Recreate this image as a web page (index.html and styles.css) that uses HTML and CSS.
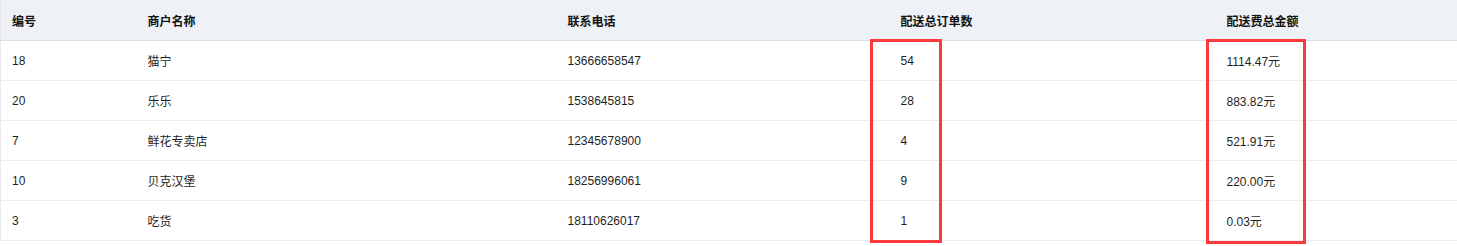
FILE: index.html
```html
<!DOCTYPE html>
<html lang="zh">
<head>
<meta charset="utf-8">
<link rel="stylesheet" href="styles.css">
</head>
<body>
<div class="wrap">
  <table class="grid">
    <colgroup>
      <col class="c1"><col class="c2"><col class="c3"><col class="c4"><col class="c5">
    </colgroup>
    <thead>
      <tr><th class="first">编号</th><th>商户名称</th><th>联系电话</th><th>配送总订单数</th><th>配送费总金额</th></tr>
    </thead>
    <tbody>
      <tr><td class="first">18</td><td>猫宁</td><td>13666658547</td><td>54</td><td>1114.47元</td></tr>
      <tr><td class="first">20</td><td>乐乐</td><td>1538645815</td><td>28</td><td>883.82元</td></tr>
      <tr><td class="first">7</td><td>鲜花专卖店</td><td>12345678900</td><td>4</td><td>521.91元</td></tr>
      <tr><td class="first">10</td><td>贝克汉堡</td><td>18256996061</td><td>9</td><td>220.00元</td></tr>
      <tr><td class="first">3</td><td>吃货</td><td>18110626017</td><td>1</td><td>0.03元</td></tr>
    </tbody>
  </table>
  <div class="mark mark-orders"></div>
  <div class="mark mark-amount"></div>
</div>
</body>
</html>
```
FILE: styles.css
```css
html, body {
  margin: 0;
  padding: 0;
  background: #fff;
}
.wrap {
  position: relative;
  width: 1457px;
  height: 246px;
  font-family: "Liberation Sans", Arial, "Noto Sans CJK SC", sans-serif;
  font-size: 12px;
  color: #1f1f1f;
}
.grid {
  width: 1457px;
  border-collapse: collapse;
  table-layout: fixed;
  border-left: 1px solid #e6e8ee;
}
.c1 { width: 135px; }
.c2 { width: 420px; }
.c3 { width: 333px; }
.c4 { width: 326px; }
.c5 { width: 243px; }
.grid th {
  height: 40px;
  padding: 0 0 0 12px;
  text-align: left;
  font-weight: bold;
  color: #111;
  background: #eef1f6;
  border-bottom: 1px solid #d8dce4;
}
.grid td {
  height: 39px;
  padding: 0 0 0 12px;
  text-align: left;
  border-bottom: 1px solid #eaecf0;
  white-space: nowrap;
}
.grid .first {
  padding-left: 11px;
}
.mark {
  position: absolute;
  box-sizing: border-box;
  border: 3px solid #fc3a3c;
}
.mark-orders {
  left: 870px;
  top: 39px;
  width: 72px;
  height: 204px;
}
.mark-amount {
  left: 1206px;
  top: 39px;
  width: 100px;
  height: 205px;
}
```
